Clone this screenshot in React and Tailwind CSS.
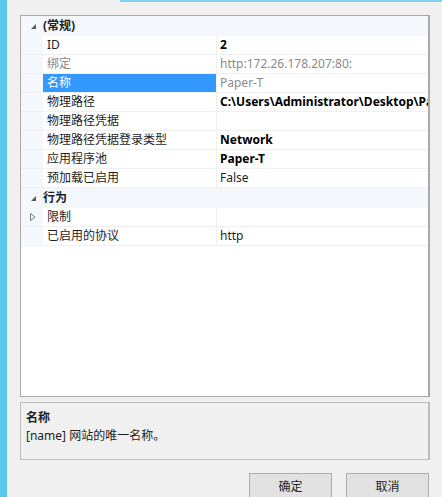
import React from 'react';

const FONT = { fontFamily: '"Segoe UI", "Noto Sans", "Noto Sans CJK SC", sans-serif' };

const ROWS = [
    { type: 'cat', label: '(常规)' },
    { label: 'ID', value: '2', bold: true },
    { label: '绑定', value: 'http:172.26.178.207:80:', dim: true },
    { label: '名称', value: 'Paper-T', dim: true, selected: true },
    { label: '物理路径', value: 'C:\\Users\\Administrator\\Desktop\\Paper-T', bold: true },
    { label: '物理路径凭据', value: '' },
    { label: '物理路径凭据登录类型', value: 'Network', bold: true },
    { label: '应用程序池', value: 'Paper-T', bold: true },
    { label: '预加载已启用', value: 'False' },
    { type: 'cat', label: '行为' },
    { label: '限制', value: '', expandable: true },
    { label: '已启用的协议', value: 'http' },
];

const CategoryRow = ({ label }) => (
    <div className="flex h-[20px] items-center bg-[#f4f7fb]">
        <div className="w-[22px] flex justify-center pl-[2px]">
            <svg width="7" height="7" viewBox="0 0 7 7">
                <path d="M6 1 L6 6 L1 6 Z" fill="#595959" />
            </svg>
        </div>
        <span className="font-bold text-[#1e1e1e]">{label}</span>
    </div>
);

const PropRow = ({ row }) => (
    <div className="flex h-[19px] bg-white border-b border-[#f0f0f0]">
        <div className="w-[22px] shrink-0 bg-[#f4f7fb] flex items-center justify-center pl-[2px]">
            {row.expandable && (
                <svg width="6" height="8" viewBox="0 0 6 8">
                    <path d="M0.5 0.5 L5 4 L0.5 7.5 Z" fill="none" stroke="#7a7a7a" strokeWidth="1" />
                </svg>
            )}
        </div>
        <div className={`w-[174px] shrink-0 flex items-center pl-[4px] border-r border-[#f0f0f0] ${row.selected ? 'bg-[#3399ff] text-white' : row.dim ? 'text-[#8a8a8a]' : 'text-[#1e1e1e]'}`}>
            {row.label}
        </div>
        <div className={`flex-1 min-w-0 flex items-center pl-[3px] overflow-hidden whitespace-nowrap ${row.bold ? 'font-bold text-black' : row.dim ? 'text-[#8a8a8a]' : 'text-[#1e1e1e]'}`}>
            {row.value}
        </div>
    </div>
);

export default function App() {
    return (
        <div className="w-[442px] h-[497px] flex bg-[#f0f0f0] overflow-hidden text-[12px]" style={FONT}>
            <div className="w-[7px] shrink-0 bg-[#5cc8ee]" />
            <div className="flex-1 min-w-0 flex flex-col">
                {/* window frame edge */}
                <div className="h-[2px] shrink-0 ml-[113px] bg-[#7fd3f0]" />
                <div className="flex-1 min-w-0 flex flex-col pl-[13px] pr-[12px] pt-[13px]">
                    {/* property grid */}
                    <div className="h-[382px] shrink-0 border border-[#a9a9a9] border-r-2 bg-white overflow-hidden">
                        {ROWS.map((row, i) =>
                            row.type === 'cat'
                                ? <CategoryRow key={i} label={row.label} />
                                : <PropRow key={i} row={row} />
                        )}
                    </div>

                    {/* description */}
                    <div className="mt-[5px] h-[58px] shrink-0 border border-[#bdbdbd] border-r-2 px-[5px] pt-[5px] text-[#1e1e1e]">
                        <div className="font-bold leading-[19px]">名称</div>
                        <div className="leading-[18px]">[name] 网站的唯一名称。</div>
                    </div>

                    {/* buttons */}
                    <div className="mt-[13px] shrink-0 flex justify-end gap-[14px] pr-[1px]">
                        <button className="w-[83px] h-[28px] bg-[#e1e1e1] border border-[#adadad] text-[#1e1e1e]">确定</button>
                        <button className="w-[83px] h-[28px] bg-[#e1e1e1] border border-[#adadad] text-[#1e1e1e]">取消</button>
                    </div>
                </div>
            </div>
        </div>
    );
}
